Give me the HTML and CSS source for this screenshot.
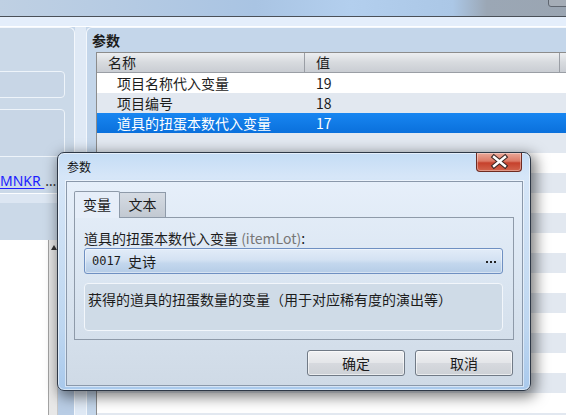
FILE: index.html
```html
<!DOCTYPE html>
<html lang="zh-CN">
<head>
<meta charset="utf-8">
<title>参数</title>
<link rel="stylesheet" href="styles.css">
</head>
<body>
<div class="screen">
  <div class="sky"><div class="sky-btn"></div></div>
  <div class="sky-sep"></div>
  <div class="toolbar"></div>
  <div class="main">
    <div class="lpanel">
      <div class="lbox lbox1"></div>
      <div class="lbox lbox2"></div>
      <div class="linkrow"><span class="link">MNKR&nbsp;</span><span class="more">…</span></div>
      <div class="lband"></div>
      <div class="lmid"></div>
      <div class="llist">
        <div class="lwhite"></div>
        <div class="lscroll"><span class="arrow"></span></div>
        <div class="lrest"></div>
      </div>
    </div>
    <div class="gap"></div>
    <div class="rpanel">
      <div class="rtitle">参数</div>
      <div class="grid">
        <div class="ghead"><div class="gh c1">名称</div><div class="gh c2">值</div><div class="gh c3"></div></div>
        <div class="grow"><div class="c1">项目名称代入变量</div><div class="c2">19</div></div>
        <div class="grow"><div class="c1">项目编号</div><div class="c2">18</div></div>
        <div class="grow sel"><div class="c1">道具的扭蛋本数代入变量</div><div class="c2">17</div></div>
        <div class="grow"></div>
        <div class="grow"></div>
        <div class="grow"></div>
        <div class="grow"></div>
        <div class="grow"></div>
        <div class="grow"></div>
        <div class="grow"></div>
        <div class="grow"></div>
        <div class="grow"></div>
        <div class="grow"></div>
        <div class="grow"></div>
        <div class="grow"></div>
        <div class="grow"></div>
        <div class="grow"></div>
        <div class="grow"></div>
      </div>
    </div>
  </div>

  <div class="dialog">
    <div class="dtitle">
      <span class="dtext">参数</span>
      <div class="close">
        <svg width="44" height="18" viewBox="0 0 44 18">
          <path d="M17 4 L28 13 M28 4 L17 13" stroke="#3b2724" stroke-width="4.6" stroke-linecap="square" fill="none"/>
          <path d="M17 4 L28 13 M28 4 L17 13" stroke="#ffffff" stroke-width="2.4" stroke-linecap="square" fill="none"/>
        </svg>
      </div>
    </div>
    <div class="client">
      <div class="tabs">
        <div class="tab active">变量</div>
        <div class="tab">文本</div>
      </div>
      <div class="tabpage">
        <div class="flabel">道具的扭蛋本数代入变量 <span class="hint">(itemLot)</span>:</div>
        <div class="field">
          <span class="code">0017</span><span class="fname">史诗</span>
          <svg class="dots" width="10" height="2" viewBox="0 0 10 2"><rect x="0" y="0" width="2" height="2" fill="#222"/><rect x="4" y="0" width="2" height="2" fill="#222"/><rect x="8" y="0" width="2" height="2" fill="#222"/></svg>
        </div>
        <div class="desc">获得的道具的扭蛋数量的变量（用于对应稀有度的演出等）</div>
      </div>
      <div class="buttons">
        <div class="btn">确定</div>
        <div class="btn">取消</div>
      </div>
    </div>
  </div>
</div>
</body>
</html>
```
FILE: styles.css
```css
* { box-sizing: border-box; margin: 0; padding: 0; }
html, body { width: 566px; height: 415px; overflow: hidden; }
body {
  font-family: "Noto Sans CJK SC", "Noto Sans", sans-serif;
  font-size: 14px;
  color: #1c1c1c;
  background: #c4d6ea;
}
.screen { position: relative; width: 566px; height: 415px; overflow: hidden; }

/* background window */
.sky {
  position: relative;
  height: 16px;
  background: linear-gradient(90deg, #bfd0e3 0%, #b6cbe3 20%, #a9c4e3 45%, #b3cfee 62%, #abc7e6 80%, #9ba7b5 86%, #9aa5b2 100%);
}
.sky-btn {
  position: absolute; right: -4px; top: -4px;
  width: 22px; height: 11px;
  border: 1px solid #5f6670; border-radius: 3px;
  background: #a5adb7;
}
.sky-sep { height: 1px; background: #4a5058; }
.toolbar { height: 10px; background: #e4eefb; border-bottom: 1px solid #fdfeff; }

.main { display: flex; height: 388px; }
.lpanel {
  flex: 0 0 75px;
  width: 75px;
  background: #cbd9e8;
  border-top: 1px solid #f3f7fc;
  border-right: 1px solid #f3f7fc;
  border-top-right-radius: 6px;
  display: flex; flex-direction: column;
}
.lbox {
  margin-left: -4px; width: 69px;
  border: 1px solid #eef4fa; border-radius: 4px;
  background: #c8d6e6;
}
.lbox1 { margin-top: 43px; height: 27px; }
.lbox2 { margin-top: 11px; height: 48px; }
.linkrow {
  height: 36px; padding-top: 14px; line-height: 20px;
  white-space: nowrap; overflow: hidden;
  font-family: "Noto Sans", sans-serif;
}
.link { color: #1d1dff; text-decoration: underline; text-underline-offset: 2px; }
.more { margin-left: 1px; color: #333; letter-spacing: 1px; }
.lband { height: 10px; background: #dce6f2; border-top: 1px solid #fbfdff; }
.lmid { height: 37px; }
.llist { flex: 1; display: flex; }
.lwhite { width: 48px; background: #ffffff; }
.lscroll {
  position: relative; width: 10px;
  background: #e8e8e8; border-left: 1px solid #a3a3a3; border-right: 1px solid #c9c9c9;
}
.arrow {
  position: absolute; left: 2px; top: 5px;
  border-left: 3px solid transparent; border-right: 3px solid transparent;
  border-bottom: 5px solid #333;
}
.lrest { flex: 1; background: #b9cde5; }

.gap { flex: 0 0 11px; width: 11px; background: #dfe9f5; }
.rpanel {
  flex: 1 1 auto;
  min-width: 0;
  overflow: hidden;
  background: #c4d6ea;
  border-top: 1px solid #f3f7fc;
  border-left: 1px solid #f3f7fc;
  border-top-left-radius: 6px;
}
.rtitle { height: 24px; line-height: 24px; padding-left: 5px; font-weight: bold; }
.grid { margin-left: 9px; border-left: 1px solid #8c8c8c; border-top: 1px solid #8c8c8c; }
.ghead {
  display: flex; height: 20px; line-height: 19px;
  background: linear-gradient(#eceef1, #d7dade 50%, #c9cdd3);
  border-bottom: 1px solid #9a9ea5;
}
.gh { padding-left: 11px; }
.gh.c1 { flex: 0 0 208px; border-right: 1px solid #9a9ea5; }
.gh.c2 { flex: 0 0 255px; border-right: 1px solid #9a9ea5; }
.gh.c3 { flex: 1; }
.grow { display: flex; height: 20px; line-height: 20px; background: #ffffff; white-space: nowrap; }
.grow:nth-child(odd) { background: #e2e8f0; }
.grow .c1 { flex: 0 0 208px; padding-left: 20px; }
.grow .c2 { padding-left: 11px; }
.grow.sel { background: linear-gradient(#1886f1, #0a70dc); color: #ffffff; }

/* dialog */
.dialog {
  position: absolute; left: 57px; top: 152px;
  width: 474px; height: 239px;
  border: 1px solid #2e3846; border-radius: 7px;
  padding: 0 7px 4px 8px;
  background: linear-gradient(180deg, #c4dcf5 0%, #d6e6f8 10%, #cbdff4 40%, #bdd6f0 75%, #a9c9ec 100%);
  box-shadow: inset 0 0 0 1px rgba(255,255,255,.55), 3px 4px 14px 2px rgba(0,0,0,.5);
}
.dtitle { position: relative; height: 28px; line-height: 28px; font-size: 12px; padding-left: 1px; color: #111; }
.close {
  position: absolute; top: 0; right: 1px;
  width: 46px; height: 19px;
  border: 1px solid #6e2b22; border-top: 0;
  border-radius: 0 0 4px 4px;
  background: linear-gradient(#eaa899 0%, #dc7a66 45%, #c6412c 55%, #d2654d 100%);
  box-shadow: inset 0 0 0 1px rgba(255,255,255,.35);
}
.close svg { display: block; }
.client {
  height: 205px;
  border: 1px solid #8a98aa;
  background: linear-gradient(#e6effa, #dae5f1 50%, #cfdae6);
  box-shadow: 0 0 0 1px rgba(255,255,255,.5);
  padding: 9px 8px 9px 7px;
  display: flex; flex-direction: column;
}
.tabs { display: flex; align-items: flex-end; height: 26px; position: relative; z-index: 1; }
.tab {
  width: 46px; height: 25px; line-height: 23px;
  text-align: center;
  border: 1px solid #8e9aa9; border-left: 0; border-bottom: 0;
  background: linear-gradient(#d5dbe3, #c2c9d2);
}
.tab.active {
  height: 27px; line-height: 25px;
  margin-bottom: -1px;
  border-left: 1px solid #8e9aa9;
  border-radius: 2px 2px 0 0;
  background: #e6eef9;
}
.tabpage { height: 123px; border: 1px solid #8e9aa9; padding: 10px 10px 8px 9px; }
.flabel { line-height: 20px; white-space: nowrap; }
.hint { color: #777; }
.field {
  height: 26px;
  border: 1px solid #6f90c2; border-radius: 3px;
  background: linear-gradient(#e2ecf8, #d4e2f3 45%, #c3d7ed 60%, #b5cce7);
  box-shadow: inset 0 0 0 1px rgba(255,255,255,.45);
  display: flex; align-items: center;
  padding-left: 7px;
  white-space: nowrap;
}
.code { font-family: "DejaVu Sans Mono", "Liberation Mono", monospace; font-size: 12px; }
.fname { margin-left: 7px; }
.dots { margin-left: auto; margin-right: 6px; margin-top: 1px; }
.desc {
  margin-top: 9px; height: 48px;
  border: 1px solid #f2f6fb; border-radius: 4px;
  background: #cfdbe7;
  padding: 5px 3px; line-height: 20px;
  white-space: nowrap;
}
.buttons { display: flex; justify-content: flex-end; gap: 10px; margin-top: 10px; padding-right: 1px; }
.btn {
  width: 98px; height: 26px; line-height: 24px;
  text-align: center;
  border: 1px solid #707a86; border-radius: 3px;
  background: linear-gradient(#f0f1f3, #e4e6e9 48%, #d6d9de 52%, #cdd1d6);
  box-shadow: inset 0 0 0 1px rgba(255,255,255,.6);
}
```
